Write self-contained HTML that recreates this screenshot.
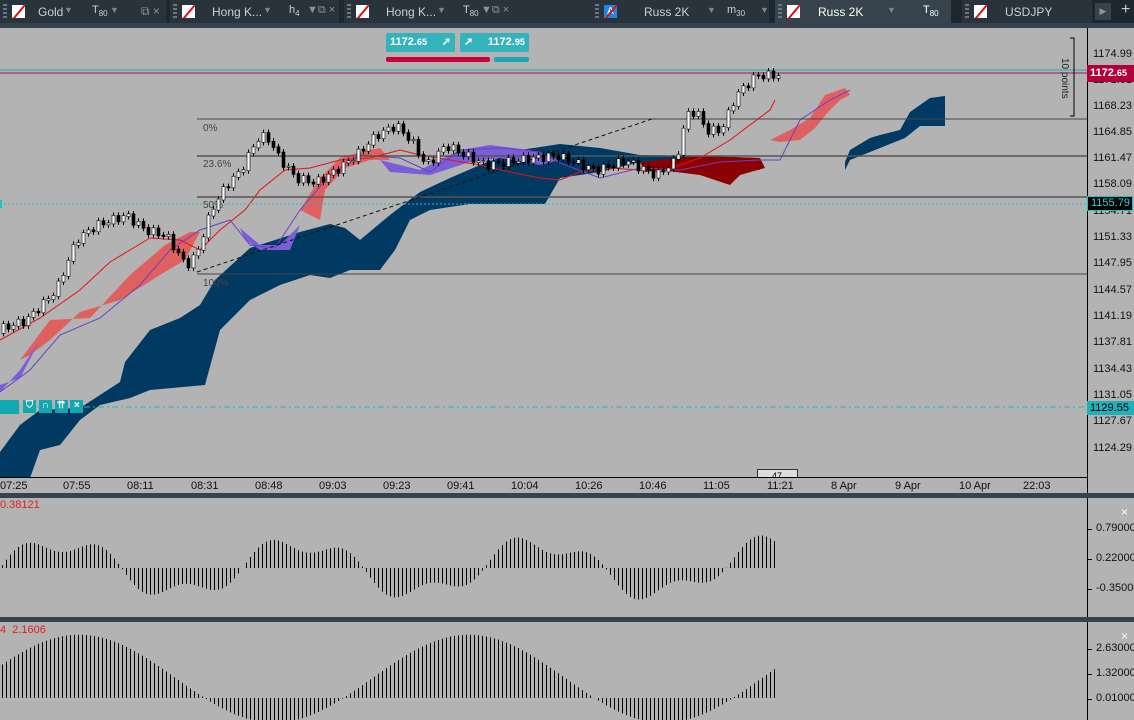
<!DOCTYPE html>
<html><head><meta charset="utf-8"><style>
*{margin:0;padding:0;box-sizing:border-box}
body{width:1134px;height:720px;overflow:hidden;background:#b3b3b3;font-family:"Liberation Sans",sans-serif;position:relative}
.top{position:absolute;left:0;top:0;width:1134px;height:23px;background:#1f272e}
.strip{position:absolute;left:0;top:23px;width:1134px;height:5px;background:#36434c}
.tab{position:absolute;top:0;height:23px;background:#29333b;color:#c8d0d6;font-size:12px;white-space:nowrap}
.tab.act{background:#36434c;color:#fff}
.grip{position:absolute;left:3px;top:4px;width:4px;height:16px;background:repeating-linear-gradient(#6b7780 0 2px,transparent 2px 4px)}
.ico{position:absolute;left:12px;top:5px;width:13px;height:13px;background:#fff;overflow:hidden}
.ico:after{content:"";position:absolute;left:6px;top:-2px;width:1.5px;height:18px;background:#e01010;transform:rotate(40deg)}
.ax{position:absolute;left:1087px;width:1px;background:#000}
.pl{position:absolute;left:1093px;font-size:11px;color:#111;white-space:nowrap}
.ol{position:absolute;left:1096px;font-size:11px;color:#111;white-space:nowrap}
.ol:before{content:"";position:absolute;left:-8px;top:7px;width:4px;height:1px;background:#000}
.tl{position:absolute;top:480px;font-size:11px;color:#111}
.sep{position:absolute;left:0;width:1134px;background:#36434c}
</style></head><body>
<div class="top"></div>
<div class="tab" style="left:0;width:166px"><div class="grip"></div><div class="ico"></div><span style="position:absolute;left:38px;top:5px">Gold</span><span style="position:absolute;left:64px;top:5px;color:#7a858d;font-size:9px">▼</span><span style="position:absolute;left:92px;top:4px;font-size:11px">T<sub style="font-size:8px">80</sub></span><span style="position:absolute;left:110px;top:5px;color:#7a858d;font-size:9px">▼</span><span style="position:absolute;left:141px;top:4px;color:#8a959d">⧉ ×</span></div>
<div class="tab" style="left:170px;width:169px"><div class="grip"></div><div class="ico"></div><span style="position:absolute;left:42px;top:5px">Hong K...</span><span style="position:absolute;left:93px;top:5px;color:#7a858d;font-size:9px">▼</span><span style="position:absolute;left:119px;top:4px;font-size:11px">h<sub style="font-size:8px">4</sub></span><span style="position:absolute;left:137px;top:4px;color:#8a959d;font-size:11px">▼⧉ ×</span></div>
<div class="tab" style="left:344px;width:248px"><div class="grip"></div><div class="ico"></div><span style="position:absolute;left:42px;top:5px">Hong K...</span><span style="position:absolute;left:93px;top:5px;color:#7a858d;font-size:9px">▼</span><span style="position:absolute;left:119px;top:4px;font-size:11px">T<sub style="font-size:8px">80</sub></span><span style="position:absolute;left:137px;top:4px;color:#8a959d;font-size:11px">▼⧉ ×</span></div>
<div class="tab" style="left:592px;width:177px"><div class="grip"></div><div class="ico" style="background:#1e88e5;color:#fff;font-size:10px;text-align:center;line-height:13px">A</div><span style="position:absolute;left:52px;top:5px">Russ 2K</span><span style="position:absolute;left:115px;top:5px;color:#7a858d;font-size:9px">▼</span><span style="position:absolute;left:135px;top:4px;font-size:11px">m<sub style="font-size:8px">30</sub></span><span style="position:absolute;left:168px;top:5px;color:#7a858d;font-size:9px">▼</span></div>
<div class="tab act" style="left:775px;width:176px"><div class="grip"></div><div class="ico"></div><span style="position:absolute;left:43px;top:5px">Russ 2K</span><span style="position:absolute;left:112px;top:5px;color:#7a858d;font-size:9px">▼</span><span style="position:absolute;left:148px;top:4px;font-size:11px">T<sub style="font-size:8px">80</sub></span></div>
<div class="tab" style="left:962px;width:130px"><div class="grip"></div><div class="ico"></div><span style="position:absolute;left:43px;top:5px">USDJPY</span></div>
<div style="position:absolute;left:1095px;top:3px;width:16px;height:17px;background:#36434c;color:#8a959d;font-size:9px;text-align:center;line-height:17px">▶</div>
<div style="position:absolute;left:1121px;top:1px;color:#c8d0d6;font-size:16px">+</div>
<div class="strip"></div>

<svg style="position:absolute;left:0;top:28px" width="1087" height="450" viewBox="0 28 1087 450">
<polygon fill="#003a63" points="0,478 0,452 20,425 40,410 80,408 100,395 120,382 125,362 150,330 180,318 200,305 215,280 250,248 300,232 330,224 345,228 360,240 390,215 420,192 450,178 480,165 520,150 560,144 600,148 640,155 700,156 760,158 760,170 720,162 640,162 600,172 560,178 545,204 520,204 470,204 430,210 410,220 395,250 380,270 350,270 330,278 310,275 280,285 250,300 220,330 205,385 150,390 130,398 100,405 80,420 60,445 40,450 30,478"/>
<polygon fill="#003a63" points="845,162 850,150 870,138 880,135 900,130 910,112 930,98 945,96 945,126 920,126 905,138 870,152 850,160 845,170"/>
<polygon fill="#e06060" points="20,360 50,320 90,318 130,275 165,245 190,232 200,232 185,260 160,275 120,300 80,312 50,340 30,355"/>
<polygon fill="#e06060" points="300,210 320,178 340,158 360,152 380,148 390,160 370,160 345,168 325,190 320,220"/>
<polygon fill="#e06060" points="770,140 790,130 810,118 825,95 845,88 850,95 840,100 828,112 815,128 800,140 780,142"/>
<polygon fill="#8b0000" points="640,162 700,156 760,158 765,168 740,175 730,185 700,175 660,170 645,172"/>
<polygon fill="#7a5ed8" points="240,228 260,245 280,245 300,225 290,250 260,250 245,240"/>
<polygon fill="#7a5ed8" points="380,160 420,170 460,150 490,145 530,150 560,160 540,165 500,158 470,162 430,175 390,172"/>
<polygon fill="#7a5ed8" points="0,385 20,378 40,340 20,370 0,392"/>
<polyline fill="none" stroke="#e81010" stroke-width="1" points="0,340 40,318 80,290 110,262 150,238 180,240 200,250 220,230 245,210 260,190 285,170 310,168 340,160 370,158 400,150 420,155 450,160 480,165 510,172 540,178 560,180 580,172 610,168 640,170 660,172 700,158 730,140 750,125 770,110 775,100"/>
<polyline fill="none" stroke="#6a40c8" stroke-width="1" points="0,392 30,370 60,335 100,318 140,285 170,250 200,230 230,220 250,245 275,248 300,210 330,175 360,155 400,158 430,172 460,150 500,148 540,152 560,163 600,178 640,168 680,170 720,162 760,160 780,160 800,120 830,100 850,90"/>
<line x1="0" y1="70" x2="1087" y2="70" stroke="#1aa8b0"/><line x1="0" y1="73" x2="1087" y2="73" stroke="#b0104a"/>
<line x1="197" y1="119" x2="1087" y2="119" stroke="#444"/>
<line x1="197" y1="156" x2="1087" y2="156" stroke="#555" stroke-width="1.5"/>
<line x1="197" y1="197" x2="1087" y2="197" stroke="#555" stroke-width="1.5"/>
<line x1="197" y1="274" x2="1087" y2="274" stroke="#444"/>
<line x1="0" y1="204" x2="1087" y2="204" stroke="#20b8c0" stroke-dasharray="2,2"/>
<line x1="0" y1="407" x2="1087" y2="407" stroke="#20b8c0" stroke-dasharray="6,3,2,3"/>
<line x1="197" y1="272" x2="655" y2="118" stroke="#111" stroke-dasharray="4,3"/>
<g font-size="10" fill="#444"><text x="203" y="131">0%</text><text x="203" y="167">23.6%</text><text x="203" y="208">50%</text><text x="203" y="286">100%</text></g>
<g id="cs" stroke="#000" stroke-width="1"></g>
<path d="M1070 38h4v78h-4" fill="none" stroke="#000"/>
<text x="1062" y="58" font-size="10" fill="#222" transform="rotate(90 1062 58)">10 points</text>
<rect x="757.5" y="469.5" width="40" height="12" fill="#ddd" stroke="#333"/><text x="772" y="479" font-size="9">47</text>
</svg>

<div style="position:absolute;left:386px;top:33px;width:69px;height:19px;background:#35b3bd;border-radius:2px;color:#fff;font-size:11px;font-weight:bold;line-height:19px;padding-left:4px">1172.<small>65</small> <span style="position:absolute;right:4px">➚</span></div>
<div style="position:absolute;left:460px;top:33px;width:69px;height:19px;background:#35b3bd;border-radius:2px;color:#fff;font-size:11px;font-weight:bold;line-height:19px;text-align:right;padding-right:4px"><span style="position:absolute;left:4px">➚</span>1172.<small>95</small></div>
<div style="position:absolute;left:386px;top:57px;width:104px;height:5px;background:#c8003a;border-radius:2px"></div>
<div style="position:absolute;left:494px;top:57px;width:35px;height:5px;background:#1aa8b8;border-radius:2px"></div>
<div style="position:absolute;left:0;top:400px;width:19px;height:14px;background:#13a8b0"></div>
<div style="position:absolute;left:23px;top:400px;width:66px;height:14px;color:#fff;font-size:10px;font-weight:bold;white-space:nowrap">
<span style="display:inline-block;width:13px;height:13px;background:#13a8b0;text-align:center">⛉</span> <span style="display:inline-block;width:13px;height:13px;background:#13a8b0;text-align:center">∩</span> <span style="display:inline-block;width:13px;height:13px;background:#13a8b0;text-align:center">⇈</span> <span style="display:inline-block;width:13px;height:13px;background:#13a8b0;text-align:center">×</span></div>

<div class="ax" style="top:28px;height:465px"></div>
<div class="pl" style="top:48px">1174.99</div><div class="pl" style="top:74px">1171.61</div><div class="pl" style="top:100px">1168.23</div><div class="pl" style="top:126px">1164.85</div><div class="pl" style="top:152px">1161.47</div><div class="pl" style="top:178px">1158.09</div><div class="pl" style="top:205px">1154.71</div><div class="pl" style="top:231px">1151.33</div><div class="pl" style="top:257px">1147.95</div><div class="pl" style="top:284px">1144.57</div><div class="pl" style="top:310px">1141.19</div><div class="pl" style="top:336px">1137.81</div><div class="pl" style="top:363px">1134.43</div><div class="pl" style="top:389px">1131.05</div><div class="pl" style="top:415px">1127.67</div><div class="pl" style="top:442px">1124.29</div>
<div style="position:absolute;left:1087px;top:65px;width:47px;height:17px;background:#b0003a;color:#fff;font-size:11px;font-weight:bold;line-height:17px;padding-left:3px">1172.<small>65</small></div>
<div style="position:absolute;left:1087px;top:196px;width:46px;height:15px;background:#000;border:1px solid #20c0c8;color:#30d0d8;font-size:11px;line-height:13px;padding-left:3px">1155.79</div>
<div style="position:absolute;left:1087px;top:401px;width:47px;height:14px;background:#20b0b8;color:#000;font-size:11px;line-height:14px;padding-left:3px">1129.55</div>
<div style="position:absolute;left:0;top:200px;width:2px;height:8px;background:#20c0c8"></div>

<div style="position:absolute;left:0;top:477px;width:1087px;height:1px;background:#000"></div>
<div class="tl" style="left:0">07:25</div><div class="tl" style="left:63px">07:55</div><div class="tl" style="left:127px">08:11</div><div class="tl" style="left:191px">08:31</div><div class="tl" style="left:255px">08:48</div><div class="tl" style="left:319px">09:03</div><div class="tl" style="left:383px">09:23</div><div class="tl" style="left:447px">09:41</div><div class="tl" style="left:511px">10:04</div><div class="tl" style="left:575px">10:26</div><div class="tl" style="left:639px">10:46</div><div class="tl" style="left:703px">11:05</div><div class="tl" style="left:767px">11:21</div><div class="tl" style="left:831px">8 Apr</div><div class="tl" style="left:895px">9 Apr</div><div class="tl" style="left:959px">10 Apr</div><div class="tl" style="left:1023px">22:03</div>

<div class="sep" style="top:493px;height:5px"></div>
<div class="sep" style="top:617px;height:5px"></div>
<div class="ax" style="top:498px;height:119px"></div><div class="ax" style="top:622px;height:98px"></div>
<div style="position:absolute;left:0;top:499px;color:#e02020;font-size:11px">0.38121</div>
<div style="position:absolute;left:0;top:624px;color:#e02020;font-size:11px">4 &nbsp;2.1606</div>
<div class="ol" style="top:522px">0.79000</div><div class="ol" style="top:552px">0.22000</div><div class="ol" style="top:582px">-0.35000</div>
<div class="ol" style="top:642px">2.63000</div><div class="ol" style="top:667px">1.32000</div><div class="ol" style="top:692px">0.01000</div>
<div style="position:absolute;left:1121px;top:505px;color:#fff;font-size:12px">×</div><div style="position:absolute;left:1121px;top:629px;color:#fff;font-size:12px">×</div>
<svg style="position:absolute;left:0;top:498px" width="1087" height="222"><g id="osc" stroke="#000" stroke-width="1"></g></svg>
<script>
var cs=document.getElementById('cs'),pts=[[0,330],[30,320],[60,290],[80,240],[100,225],[130,215],[150,230],[170,235],[190,265],[200,255],[215,210],[230,185],[245,170],[260,140],[270,135],[285,160],[300,178],[320,182],[340,170],[360,155],[380,135],[400,125],[415,140],[430,165],[450,145],[470,155],[490,165],[520,160],[560,155],[600,170],[630,160],[660,175],[680,160],[690,115],[700,110],[710,130],[725,130],[740,95],[760,75],[775,75]],h='';
function py(x){for(var i=1;i<pts.length;i++)if(x<=pts[i][0]){var a=pts[i-1],b=pts[i];return a[1]+(b[1]-a[1])*(x-a[0])/(b[0]-a[0]);}return 75;}
var k=0;
for(var x=2;x<778;x+=5){k++;var n=Math.sin(k*2.3)*4,y=py(x)+n,y2=py(x+5)+Math.sin((k+1)*2.3)*4,t=Math.min(y,y2),bt=Math.max(y,y2)+1,up=y2<y,cx=Math.round(x)+1.5;h+='<line x1="'+cx+'" y1="'+(t-3)+'" x2="'+cx+'" y2="'+(bt+3)+'"/><rect x="'+(cx-1.5)+'" y="'+t+'" width="3" height="'+(bt-t)+'" fill="'+(up?'#fff':'#000')+'" stroke-width="0.6"/>';}
cs.innerHTML=h;
var o=document.getElementById('osc'),s='';
for(var x=2;x<778;x+=4){var v=Math.sin(x/38)*0.8+Math.sin(x/13)*0.3,xx=x+0.5;s+='<line x1="'+xx+'" y1="70" x2="'+xx+'" y2="'+(70-v*32)+'"/>';var w=Math.sin(x/62+0.3)*0.8+0.35;s+='<line x1="'+xx+'" y1="200" x2="'+xx+'" y2="'+(200-w*55)+'"/>';}
o.innerHTML=s;
</script>
</body></html>
